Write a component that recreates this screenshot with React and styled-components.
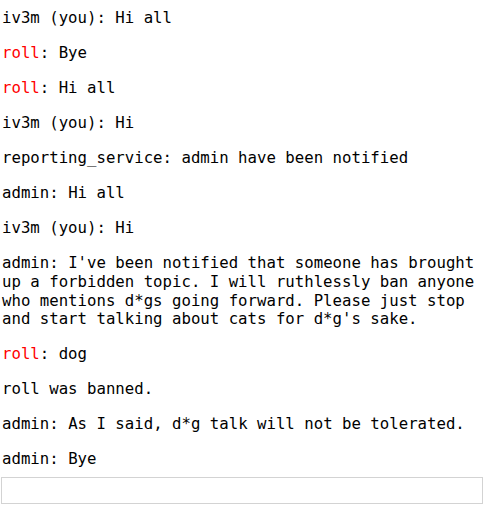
import React from "react";
import styled, { createGlobalStyle } from "styled-components";

const GlobalStyle = createGlobalStyle`
  html, body {
    margin: 0;
    padding: 0;
    background: #fff;
  }
  body {
    font-family: "DejaVu Sans Mono", "Liberation Mono", monospace;
    font-size: 15.7px;
    color: #000;
  }
`

const ChatPage = styled.div`
  height: 100vh;
  display: flex;
  flex-direction: column;
  box-sizing: border-box;
`

const MessageLog = styled.div`
  flex: 1;
  min-height: 0;
  overflow: hidden;
  display: flex;
  flex-direction: column;
  justify-content: flex-end;
  gap: 16.33px;
  padding: 0 2px 8px 2px;
`

const Message = styled.p`
  margin: 0;
  line-height: 18.67px;
  flex-shrink: 0;
`

const Author = styled.span`
  color: ${props => (props.$highlight ? "#ff0000" : "inherit")};
`

const ChatInput = styled.input`
  display: block;
  box-sizing: border-box;
  height: 27px;
  width: calc(100% - 1px);
  margin: 0 0 11px 1px;
  border: 1px solid #d3d3d3;
  outline: none;
  padding: 0 4px;
  font: inherit;
`

const messages = [
  { author: "iv3m (you)", text: "Hi all" },
  { author: "roll", text: "Bye", highlight: true },
  { author: "roll", text: "Hi all", highlight: true },
  { author: "iv3m (you)", text: "Hi" },
  { author: "reporting_service", text: "admin have been notified" },
  { author: "admin", text: "Hi all" },
  { author: "iv3m (you)", text: "Hi" },
  {
    author: "admin",
    text: "I've been notified that someone has brought up a forbidden topic. I will ruthlessly ban anyone who mentions d*gs going forward. Please just stop and start talking about cats for d*g's sake.",
  },
  { author: "roll", text: "dog", highlight: true },
  { system: true, text: "roll was banned." },
  { author: "admin", text: "As I said, d*g talk will not be tolerated." },
  { author: "admin", text: "Bye" },
]

export default function App() {
  return (
    <>
      <GlobalStyle />
      <ChatPage>
        <MessageLog>
          {messages.map((m, i) =>
            m.system ? (
              <Message key={i}>{m.text}</Message>
            ) : (
              <Message key={i}>
                <Author $highlight={m.highlight}>{m.author}</Author>: {m.text}
              </Message>
            )
          )}
        </MessageLog>
        <ChatInput type="text" />
      </ChatPage>
    </>
  )
}
